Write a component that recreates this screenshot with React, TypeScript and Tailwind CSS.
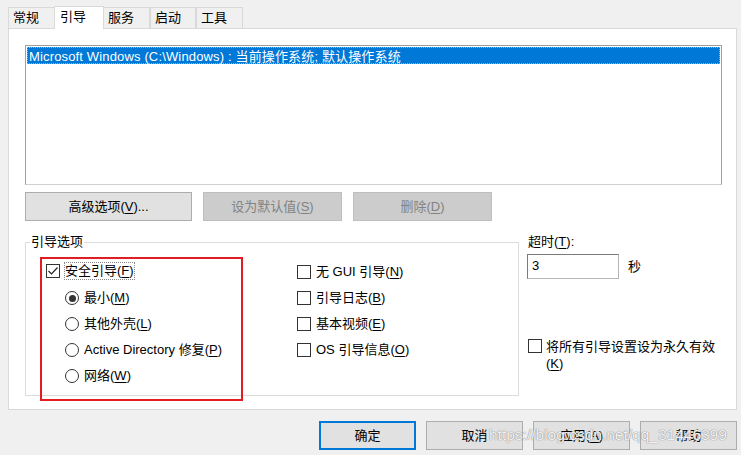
import React from 'react';

const font = { fontFamily: '"Liberation Sans", "Noto Sans CJK SC", sans-serif' };

// label with an underlined accelerator letter, e.g. 高级选项(V)...
const Acc = ({ pre, k, post = ')' }: { pre: string; k: string; post?: string }) => (
  <span>
    {pre}(<span className="underline underline-offset-2">{k}</span>{post}
  </span>
);

const CheckBox = ({ checked = false }: { checked?: boolean }) => (
  <span className="w-[14px] h-[14px] shrink-0 border border-[#333333] bg-white flex items-center justify-center">
    {checked && (
      <svg width="12" height="12" viewBox="0 0 12 12">
        <polyline points="1.5,6 4.5,9 10.5,2.5" fill="none" stroke="#222" strokeWidth="1.2" />
      </svg>
    )}
  </span>
);

const Radio = ({ checked = false }: { checked?: boolean }) => (
  <span className="w-[14px] h-[14px] shrink-0 rounded-full border border-[#333333] bg-white flex items-center justify-center">
    {checked && <span className="w-[7px] h-[7px] rounded-full bg-[#333333]" />}
  </span>
);

const tabs = [
  { name: '常规', w: 'w-[47px]' },
  { name: '引导', w: 'w-[50px]', active: true },
  { name: '服务', w: 'w-[47px]' },
  { name: '启动', w: 'w-[46px]' },
  { name: '工具', w: 'w-[47px]' },
];

export default function App() {
  return (
    <div className="relative w-[741px] h-[455px] bg-[#f0f0f0] text-[13px] text-black overflow-hidden" style={font}>
      {/* Tab strip */}
      <div className="flex items-end h-[29px] pl-[8px] pt-[6px] relative z-10">
        {tabs.map((t) =>
          t.active ? (
            <div
              key={t.name}
              className={`${t.w} h-[23px] -mx-[1px] bg-white border border-b-0 border-[#d9d9d9] pl-[5px] leading-[20px]`}
            >
              {t.name}
            </div>
          ) : (
            <div
              key={t.name}
              className={`${t.w} h-[21px] mb-[1px] bg-[#f0f0f0] border border-b-0 border-[#d9d9d9] pl-[4px] leading-[20px]`}
            >
              {t.name}
            </div>
          )
        )}
      </div>

      {/* Tab panel */}
      <div className="-mt-[1px] ml-[8px] w-[729px] h-[382px] bg-white border border-[#d9d9d9] pt-[16px] pl-[16px]">
        {/* OS list */}
        <div className="w-[697px] h-[140px] border border-[#a0a0a0] border-b-[#cfcfcf] bg-white p-[1px]">
          <div className="h-[17px] bg-[#0078d7] text-white leading-[17px] pl-[1px] border border-dotted border-[#8ab8e8] tracking-[0.15px]">
            Microsoft Windows (C:\Windows) : 当前操作系统; 默认操作系统
          </div>
        </div>

        {/* List buttons */}
        <div className="flex gap-[11px] mt-[7px]">
          <div className="w-[167px] h-[29px] bg-[#e1e1e1] border border-[#adadad] flex items-center justify-center">
            <Acc pre="高级选项" k="V" post=")..." />
          </div>
          <div className="w-[139px] h-[29px] bg-[#cccccc] border border-[#bfbfbf] text-[#838383] flex items-center justify-center">
            <Acc pre="设为默认值" k="S" />
          </div>
          <div className="w-[139px] h-[29px] bg-[#cccccc] border border-[#bfbfbf] text-[#838383] flex items-center justify-center">
            <Acc pre="删除" k="D" />
          </div>
        </div>

        {/* Boot options + timeout */}
        <div className="flex mt-[13px]">
          <fieldset className="w-[494px] h-[162px] border border-[#dcdcdc] px-[14px]">
            <legend className="ml-[-10px] px-[1px] leading-[16px]">引导选项</legend>
            <div className="flex">
              {/* red highlight around safe boot options */}
              <div className="w-[203px] h-[144px] mt-[7px] border-2 border-[#e31b23] pl-[4px] pt-[2px] flex flex-col gap-[6px]">
                <div className="h-[20px] flex items-center gap-[4px] mb-[1px]">
                  <CheckBox checked />
                  <span className="border border-dotted border-[#888] leading-[16px] px-0">
                    <Acc pre="安全引导" k="F" />
                  </span>
                </div>
                {[
                  { pre: '最小', k: 'M', checked: true },
                  { pre: '其他外壳', k: 'L' },
                  { pre: 'Active Directory 修复', k: 'P' },
                  { pre: '网络', k: 'W' },
                ].map((r) => (
                  <div key={r.k} className="h-[20px] flex items-center gap-[5px] pl-[19px]">
                    <Radio checked={r.checked} />
                    <Acc pre={r.pre} k={r.k} />
                  </div>
                ))}
              </div>

              <div className="ml-[54px] mt-[12px] flex flex-col gap-[6px]">
                {[
                  { pre: '无 GUI 引导', k: 'N' },
                  { pre: '引导日志', k: 'B' },
                  { pre: '基本视频', k: 'E' },
                  { pre: 'OS 引导信息', k: 'O' },
                ].map((c) => (
                  <div key={c.k} className="h-[20px] flex items-center gap-[5px]">
                    <CheckBox />
                    <Acc pre={c.pre} k={c.k} />
                  </div>
                ))}
              </div>
            </div>
          </fieldset>

          <div className="ml-[8px] flex flex-col">
            <div className="leading-[16px] ml-[1px]">
              <Acc pre="超时" k="T" post="):" />
            </div>
            <div className="flex items-center mt-[4px]">
              <div className="w-[92px] h-[25px] border border-[#7a7a7a] border-b-[#b5b5b5] border-r-[#b5b5b5] bg-white pl-[4px] leading-[21px]">
                3
              </div>
              <span className="ml-[9px]">秒</span>
            </div>
            <div className="flex items-start gap-[4px] mt-[59px] ml-[1px]">
              <span className="mt-[1px]">
                <CheckBox />
              </span>
              <span className="w-[176px] leading-[17px]">
                将所有引导设置设为永久有效 <Acc pre="" k="K" />
              </span>
            </div>
          </div>
        </div>
      </div>

      {/* Dialog buttons */}
      <div className="flex justify-end gap-[10px] mt-[11px] pr-[4px]">
        <div className="w-[97px] h-[29px] bg-[#e1e1e1] border-2 border-[#0078d7] flex items-center justify-center">确定</div>
        <div className="w-[97px] h-[29px] bg-[#e1e1e1] border border-[#adadad] flex items-center justify-center">取消</div>
        <div className="w-[97px] h-[29px] bg-[#e1e1e1] border border-[#adadad] flex items-center justify-center">
          <Acc pre="应用" k="A" />
        </div>
        <div className="w-[97px] h-[29px] bg-[#e1e1e1] border border-[#adadad] flex items-center justify-center">帮助</div>
      </div>

      {/* blog watermark over the buttons */}
      <div
        className="absolute left-[489px] top-[425px] text-[15.5px] text-white/90 leading-[20px] pointer-events-none [text-shadow:0_0_1px_#777,0_0_1px_#999]"
        style={{ fontFamily: '"Liberation Sans", sans-serif' }}
      >
        https://blog.csdn.net/qq_31446399
      </div>
    </div>
  );
}
